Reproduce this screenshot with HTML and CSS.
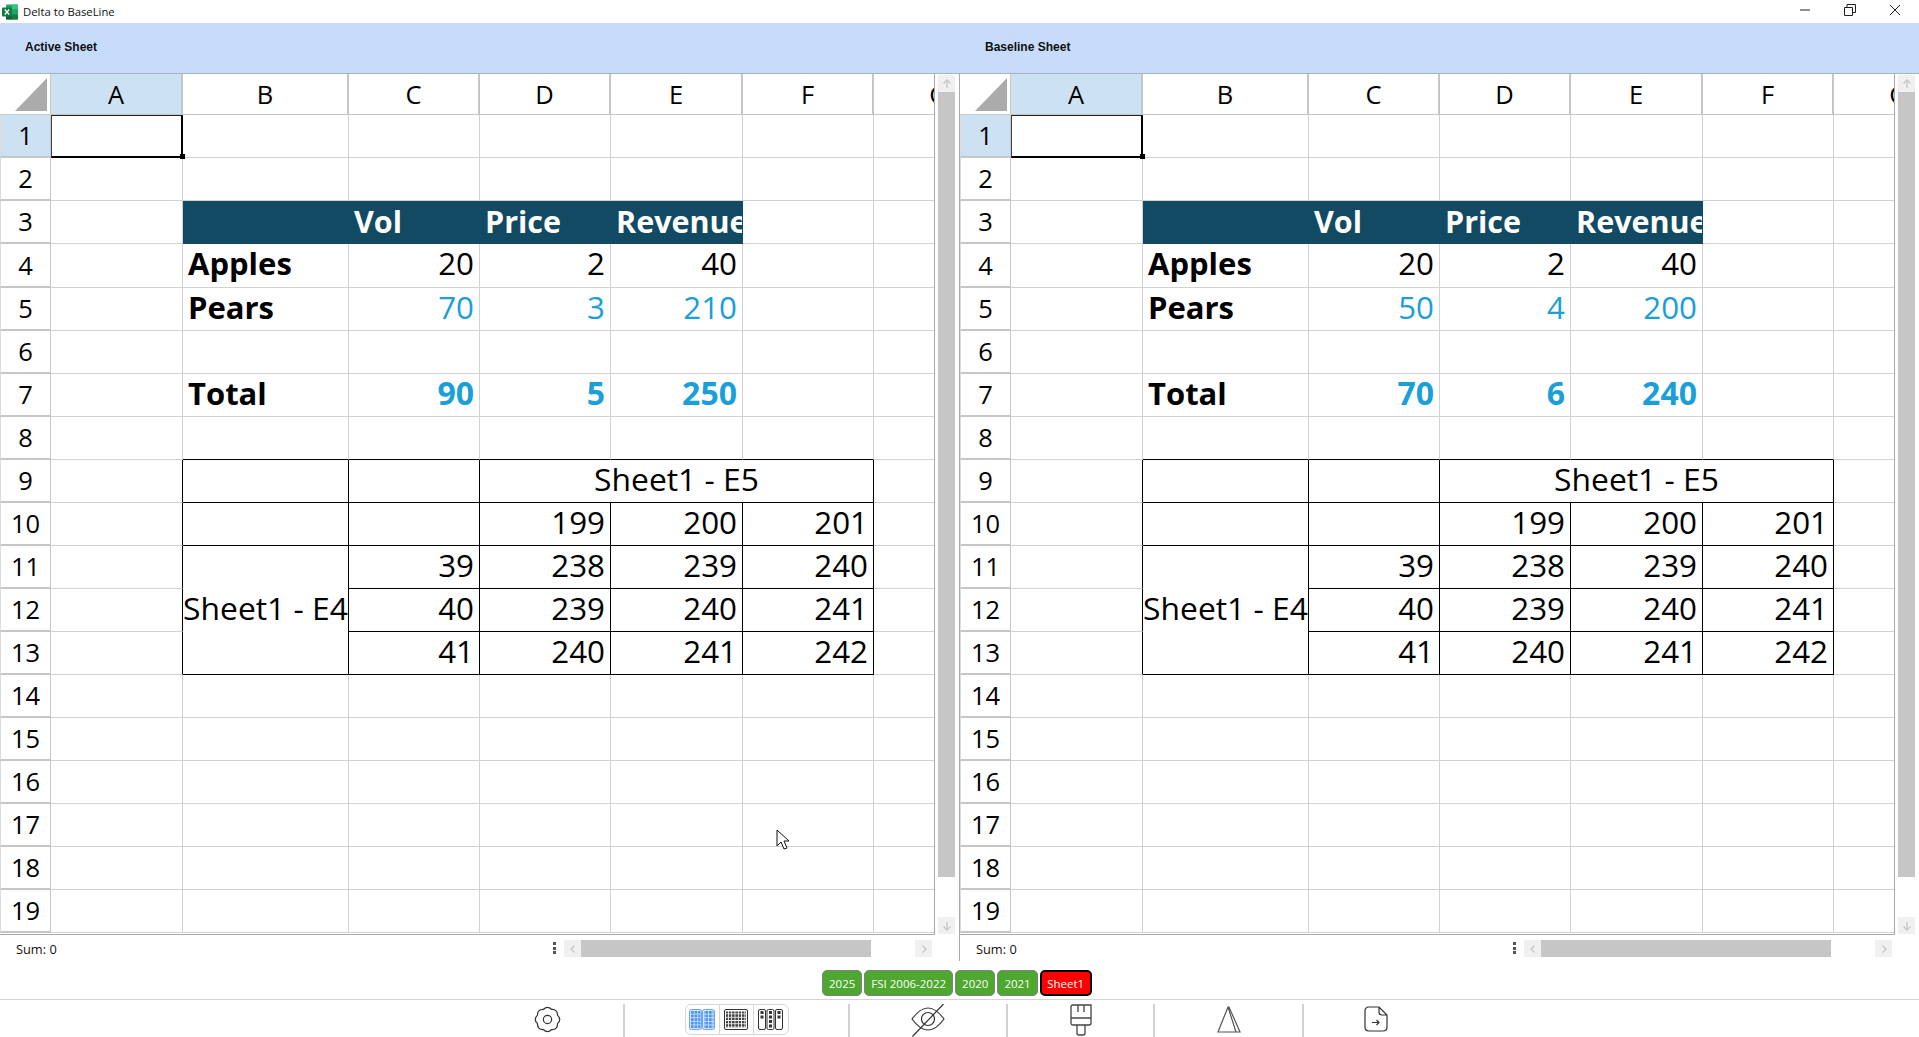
FILE: index.html
```html
<!DOCTYPE html>
<html lang="en">
<head>
<meta charset="utf-8">
<title>Delta to BaseLine</title>
<link rel="stylesheet" href="styles.css">
</head>
<body>
<header class="titlebar">
  <svg class="appicon" viewBox="0 0 16 16" width="16" height="16"><rect x="4" y="0.5" width="12" height="15" rx="1" fill="#21a366"/><rect x="10" y="0.5" width="6" height="5" fill="#33c481"/><rect x="10" y="5.5" width="6" height="5" fill="#21a366"/><rect x="10" y="10.5" width="6" height="5" fill="#107c41"/><rect x="4" y="10.5" width="6" height="5" fill="#185c37"/><rect x="0" y="3.5" width="10" height="9" rx="1" fill="#107c41"/><path d="M2.8 5.5l4.4 5M7.2 5.5l-4.4 5" stroke="#fff" stroke-width="1.3"/></svg>
  <span class="apptitle">Delta to BaseLine</span>
  <div class="winctl">
    <svg viewBox="0 0 12 12" width="12" height="12"><path d="M1 6h10" stroke="#222"/></svg>
    <svg viewBox="0 0 12 12" width="12" height="12"><path d="M.5 3.5h8v8h-8zM3 3.5V.5h8.5v8H8.5" fill="none" stroke="#222"/></svg>
    <svg viewBox="0 0 12 12" width="12" height="12"><path d="M1 1l10 10M11 1L1 11" stroke="#222"/></svg>
  </div>
</header>

<main class="panes">
  <section class="pane">
    <div class="band">Active Sheet</div>
    <div class="body first">
      <div class="sheetwrap">
        <div class="viewport">
          <table class="grid">
            <colgroup><col class="c0"><col class="c1"><col class="c2"><col class="c3"><col class="c3"><col class="c4"><col class="c3"><col class="c3"></colgroup>
            <tr class="hrow"><th class="corner"></th><th class="ch on">A</th><th class="ch">B</th><th class="ch">C</th><th class="ch">D</th><th class="ch">E</th><th class="ch">F</th><th class="ch">G</th></tr>
            <tr><th class="rh on">1</th><td class="sel"></td><td></td><td></td><td></td><td></td><td></td><td></td></tr>
            <tr><th class="rh">2</th><td></td><td></td><td></td><td></td><td></td><td></td><td></td></tr>
            <tr><th class="rh">3</th><td></td><td class="hd"></td><td class="hd">Vol</td><td class="hd">Price</td><td class="hd clip">Revenue</td><td></td><td></td></tr>
            <tr class="tall"><th class="rh">4</th><td></td><td class="name">Apples</td><td class="n">20</td><td class="n">2</td><td class="n">40</td><td></td><td></td></tr>
            <tr><th class="rh">5</th><td></td><td class="name">Pears</td><td class="n blue">70</td><td class="n blue">3</td><td class="n blue">210</td><td></td><td></td></tr>
            <tr><th class="rh">6</th><td></td><td></td><td></td><td></td><td></td><td></td><td></td></tr>
            <tr><th class="rh">7</th><td></td><td class="name">Total</td><td class="n blue b">90</td><td class="n blue b">5</td><td class="n blue b">250</td><td></td><td></td></tr>
            <tr><th class="rh">8</th><td></td><td class="bb"></td><td class="bb"></td><td class="bb"></td><td class="bb"></td><td class="bb"></td><td></td></tr>
            <tr><th class="rh">9</th><td class="br"></td><td class="k"></td><td class="k"></td><td class="k m" colspan="3">Sheet1 - E5</td><td></td></tr>
            <tr><th class="rh">10</th><td class="br"></td><td class="k"></td><td class="k"></td><td class="k n">199</td><td class="k n">200</td><td class="k n">201</td><td></td></tr>
            <tr><th class="rh">11</th><td class="br"></td><td class="k m" rowspan="3">Sheet1 - E4</td><td class="k n">39</td><td class="k n">238</td><td class="k n">239</td><td class="k n">240</td><td></td></tr>
            <tr><th class="rh">12</th><td class="br"></td><td class="k n">40</td><td class="k n">239</td><td class="k n">240</td><td class="k n">241</td><td></td></tr>
            <tr><th class="rh">13</th><td class="br"></td><td class="k n">41</td><td class="k n">240</td><td class="k n">241</td><td class="k n">242</td><td></td></tr>
            <tr><th class="rh">14</th><td></td><td></td><td></td><td></td><td></td><td></td><td></td></tr>
            <tr><th class="rh">15</th><td></td><td></td><td></td><td></td><td></td><td></td><td></td></tr>
            <tr><th class="rh">16</th><td></td><td></td><td></td><td></td><td></td><td></td><td></td></tr>
            <tr><th class="rh">17</th><td></td><td></td><td></td><td></td><td></td><td></td><td></td></tr>
            <tr><th class="rh">18</th><td></td><td></td><td></td><td></td><td></td><td></td><td></td></tr>
            <tr><th class="rh">19</th><td></td><td></td><td></td><td></td><td></td><td></td><td></td></tr>
          </table>
          <svg class="cursor" viewBox="0 0 14 22" width="14" height="22"><path d="M1 1v16l4-4 3 7 3-1-3-7h5z" fill="#fff" stroke="#111"/></svg>
        </div>
        <div class="vbar">
          <div class="sbtn"><svg viewBox="0 0 10 10" width="10" height="10"><path d="M5 9V1M1.5 4.5L5 1l3.5 3.5" fill="none" stroke="#c8c8c8" stroke-width="1.4"/></svg></div>
          <div class="vthumb"></div>
          <div class="vgap"></div>
          <div class="sbtn"><svg viewBox="0 0 10 10" width="10" height="10"><path d="M5 1v8M1.5 5.5L5 9l3.5-3.5" fill="none" stroke="#c8c8c8" stroke-width="1.4"/></svg></div>
        </div>
      </div>
      <div class="status">
        <span class="sum">Sum: 0</span>
        <span class="dots"><i></i><i></i><i></i></span>
        <div class="hbar">
          <div class="hbtn"><svg viewBox="0 0 10 10" width="10" height="10"><path d="M6.5 1.5L3 5l3.500 3.500" fill="none" stroke="#c8c8c8" stroke-width="1.4"/></svg></div>
          <div class="hthumb"></div>
          <div class="hgap"></div>
          <div class="hbtn"><svg viewBox="0 0 10 10" width="10" height="10"><path d="M3.500 1.500L7 5 3.500 8.500" fill="none" stroke="#c8c8c8" stroke-width="1.4"/></svg></div>
        </div>
      </div>
    </div>
  </section>

  <section class="pane">
    <div class="band">Baseline Sheet</div>
    <div class="body">
      <div class="sheetwrap">
        <div class="viewport">
          <table class="grid">
            <colgroup><col class="c0"><col class="c1"><col class="c2"><col class="c3"><col class="c3"><col class="c4"><col class="c3"><col class="c3"></colgroup>
            <tr class="hrow"><th class="corner"></th><th class="ch on">A</th><th class="ch">B</th><th class="ch">C</th><th class="ch">D</th><th class="ch">E</th><th class="ch">F</th><th class="ch">G</th></tr>
            <tr><th class="rh on">1</th><td class="sel"></td><td></td><td></td><td></td><td></td><td></td><td></td></tr>
            <tr><th class="rh">2</th><td></td><td></td><td></td><td></td><td></td><td></td><td></td></tr>
            <tr><th class="rh">3</th><td></td><td class="hd"></td><td class="hd">Vol</td><td class="hd">Price</td><td class="hd clip">Revenue</td><td></td><td></td></tr>
            <tr class="tall"><th class="rh">4</th><td></td><td class="name">Apples</td><td class="n">20</td><td class="n">2</td><td class="n">40</td><td></td><td></td></tr>
            <tr><th class="rh">5</th><td></td><td class="name">Pears</td><td class="n blue">50</td><td class="n blue">4</td><td class="n blue">200</td><td></td><td></td></tr>
            <tr><th class="rh">6</th><td></td><td></td><td></td><td></td><td></td><td></td><td></td></tr>
            <tr><th class="rh">7</th><td></td><td class="name">Total</td><td class="n blue b">70</td><td class="n blue b">6</td><td class="n blue b">240</td><td></td><td></td></tr>
            <tr><th class="rh">8</th><td></td><td class="bb"></td><td class="bb"></td><td class="bb"></td><td class="bb"></td><td class="bb"></td><td></td></tr>
            <tr><th class="rh">9</th><td class="br"></td><td class="k"></td><td class="k"></td><td class="k m" colspan="3">Sheet1 - E5</td><td></td></tr>
            <tr><th class="rh">10</th><td class="br"></td><td class="k"></td><td class="k"></td><td class="k n">199</td><td class="k n">200</td><td class="k n">201</td><td></td></tr>
            <tr><th class="rh">11</th><td class="br"></td><td class="k m" rowspan="3">Sheet1 - E4</td><td class="k n">39</td><td class="k n">238</td><td class="k n">239</td><td class="k n">240</td><td></td></tr>
            <tr><th class="rh">12</th><td class="br"></td><td class="k n">40</td><td class="k n">239</td><td class="k n">240</td><td class="k n">241</td><td></td></tr>
            <tr><th class="rh">13</th><td class="br"></td><td class="k n">41</td><td class="k n">240</td><td class="k n">241</td><td class="k n">242</td><td></td></tr>
            <tr><th class="rh">14</th><td></td><td></td><td></td><td></td><td></td><td></td><td></td></tr>
            <tr><th class="rh">15</th><td></td><td></td><td></td><td></td><td></td><td></td><td></td></tr>
            <tr><th class="rh">16</th><td></td><td></td><td></td><td></td><td></td><td></td><td></td></tr>
            <tr><th class="rh">17</th><td></td><td></td><td></td><td></td><td></td><td></td><td></td></tr>
            <tr><th class="rh">18</th><td></td><td></td><td></td><td></td><td></td><td></td><td></td></tr>
            <tr><th class="rh">19</th><td></td><td></td><td></td><td></td><td></td><td></td><td></td></tr>
          </table>
        </div>
        <div class="vbar">
          <div class="sbtn"><svg viewBox="0 0 10 10" width="10" height="10"><path d="M5 9V1M1.5 4.5L5 1l3.5 3.5" fill="none" stroke="#c8c8c8" stroke-width="1.4"/></svg></div>
          <div class="vthumb"></div>
          <div class="vgap"></div>
          <div class="sbtn"><svg viewBox="0 0 10 10" width="10" height="10"><path d="M5 1v8M1.5 5.5L5 9l3.5-3.5" fill="none" stroke="#c8c8c8" stroke-width="1.4"/></svg></div>
        </div>
      </div>
      <div class="status">
        <span class="sum">Sum: 0</span>
        <span class="dots"><i></i><i></i><i></i></span>
        <div class="hbar">
          <div class="hbtn"><svg viewBox="0 0 10 10" width="10" height="10"><path d="M6.5 1.5L3 5l3.500 3.500" fill="none" stroke="#c8c8c8" stroke-width="1.4"/></svg></div>
          <div class="hthumb"></div>
          <div class="hgap"></div>
          <div class="hbtn"><svg viewBox="0 0 10 10" width="10" height="10"><path d="M3.500 1.500L7 5 3.500 8.500" fill="none" stroke="#c8c8c8" stroke-width="1.4"/></svg></div>
        </div>
      </div>
    </div>
  </section>
</main>

<nav class="tabs">
  <span class="tab">2025</span><span class="tab">FSI 2006-2022</span><span class="tab">2020</span><span class="tab">2021</span><span class="tab cur">Sheet1</span>
</nav>

<footer class="toolbar">
  <div class="tool">
    <svg viewBox="-1 -1 30 30" width="31" height="31"><path d="M9.980 4.300Q14 0 18.020 4.300Q23.900 4.100 23.700 9.980Q28 14 23.700 18.020Q23.900 23.900 18.020 23.700Q14 28 9.980 23.700Q4.100 23.900 4.300 18.020Q0 14 4.300 9.980Q4.100 4.100 9.980 4.300Z" fill="none" stroke="#333" stroke-width="1.200"/><circle cx="14" cy="14" r="4" fill="none" stroke="#333" stroke-width="1.200"/></svg>
  </div>
  <div class="tool">
    <div class="seg">
      <div class="segitem">
        <svg viewBox="0 0 26 21" width="26" height="21"><defs><pattern id="pb" width="3.600" height="3.600" patternUnits="userSpaceOnUse" x="2" y="2"><rect width="2.800" height="2.800" fill="#4a94f2"/></pattern></defs><rect x=".5" y=".5" width="12" height="20" rx="2" fill="#d5e6fd" stroke="#6aa6f5"/><rect x="13.500" y=".5" width="12" height="20" rx="2" fill="#d5e6fd" stroke="#6aa6f5"/><rect x="2" y="2" width="9.500" height="17" fill="url(#pb)"/><rect x="15" y="2" width="9.500" height="17" fill="url(#pb)"/></svg>
      </div>
      <div class="segitem">
        <svg viewBox="0 0 24 21" width="24" height="21"><defs><pattern id="pd" width="3.300" height="3.300" patternUnits="userSpaceOnUse" x="1.500" y="2"><rect width="2.500" height="2.500" fill="#444"/></pattern></defs><rect x=".5" y=".5" width="23" height="20" rx="1.500" fill="#fff" stroke="#333"/><rect x="2" y="2.500" width="20" height="16" fill="url(#pd)"/></svg>
      </div>
      <div class="segitem">
        <svg viewBox="0 0 25 21" width="25" height="21"><g fill="#fff" stroke="#333"><rect x=".5" y=".5" width="7" height="20" rx="1.500"/><rect x="9" y=".5" width="7" height="20" rx="1.500"/><rect x="17.500" y=".5" width="7" height="20" rx="1.500"/></g><path d="M2.500 2h3v3h-3zM2.500 6.500h3v3h-3zM11 2h3v3h-3zM11 6.500h3v3h-3zM11 11h3v3h-3zM11 15.500h3v3h-3zM19.500 2h3v3h-3zM19.500 6.500h3v3h-3z" fill="#333"/></svg>
      </div>
    </div>
  </div>
  <div class="tool">
    <svg viewBox="0 0 34 33" width="34" height="33"><path d="M1 15Q9 4 17 4T33 15Q25 26 17 26T1 15Z" fill="none" stroke="#333" stroke-width="1.200"/><circle cx="17" cy="15" r="6.500" fill="none" stroke="#333" stroke-width="1.200"/><path d="M1.500 32.500L32.500 0" stroke="#333" stroke-width="1.200"/></svg>
  </div>
  <div class="tool">
    <svg viewBox="0 0 22 32" width="22" height="32"><path d="M1 3Q1 1 3 1H21V19Q21 21 19 21H3Q1 21 1 19ZM1 14H21M8 1V8M14 1V8M7 21V29Q7 31 9 31H13Q15 31 15 29V21" fill="none" stroke="#444" stroke-width="1.300"/></svg>
  </div>
  <div class="tool down1">
    <svg viewBox="0 0 24 28" width="24" height="28"><path d="M11 2L1 27H23L12 2ZM11 2L19 27" fill="none" stroke="#555" stroke-width="1.200"/></svg>
  </div>
  <div class="tool down2">
    <svg viewBox="0 0 24 26" width="24" height="26"><path d="M5 1H15L23 9V21Q23 25 19 25H5Q1 25 1 21V5Q1 1 5 1ZM15 1V6Q15 9 18 9H23M8 16.500H15M12.500 14L15 16.500L12.500 19" fill="none" stroke="#333" stroke-width="1.200"/></svg>
  </div>
</footer>
</body>
</html>
```
FILE: styles.css
```css
* { box-sizing: border-box; }
html, body { margin: 0; height: 100%; }
body {
  width: 1919px;
  height: 1037px;
  overflow: hidden;
  display: flex;
  flex-direction: column;
  background: #fff;
  color: #000;
  font-family: "Open Sans", sans-serif;
}

/* title bar */
.titlebar { height: 23px; display: flex; align-items: center; padding-left: 2px; flex: none; }
.appicon { flex: none; }
.apptitle { margin-left: 5px; font-size: 11.300px; color: #111; }
.winctl { margin-left: auto; display: flex; gap: 33px; padding-right: 18px; margin-top: -3px; }

/* panes */
.panes { display: flex; height: 938px; flex: none; }
.pane { width: 960px; display: flex; flex-direction: column; flex: none; }
.pane + .pane { width: 959px; }
.band {
  height: 51px;
  flex: none;
  background: #c7dcfa;
  border-bottom: 1px solid #a8b2bf;
  padding: 0 0 2px 25px;
  display: flex;
  align-items: center;
  font: bold 12px "Liberation Sans", Arial, sans-serif;
  color: #111;
}
.body { flex: 1; display: flex; flex-direction: column; min-height: 0; }
.body.first { border-right: 1px solid #a9a9a9; }
.sheetwrap { height: 861px; display: flex; flex: none; }
.viewport {
  width: 935px;
  flex: none;
  position: relative;
  overflow: hidden;
  border-right: 1px solid #a9a9a9;
  border-bottom: 1px solid #a9a9a9;
}
.cursor { position: absolute; left: 776px; top: 755px; }

/* sheet */
.grid { table-layout: fixed; width: 1005px; border-collapse: separate; border-spacing: 0; font-size: 31.300px; }
.c0 { width: 51px; }
.c1 { width: 132px; }
.c2 { width: 166px; }
.c3 { width: 131px; }
.c4 { width: 132px; }
.grid tr { height: 43px; }
.grid tr.hrow { height: 41px; }
.grid tr.tall { height: 44px; }
.grid td {
  padding: 0 5px 3px;
  border-right: 1px solid #d2d2d2;
  border-bottom: 1px solid #d2d2d2;
  white-space: nowrap;
  line-height: 1.2;
}
.grid td.clip { overflow: hidden; }
.grid th { padding: 0; font-weight: 400; font-size: 25.500px; line-height: 1.2; }
.corner { position: relative; border-bottom: 1px solid #c8c8c8; border-right: 1px solid #c8c8c8; }
.corner::after {
  content: "";
  position: absolute;
  left: 15px;
  top: 4px;
  width: 32px;
  height: 33px;
  background: #ababab;
  clip-path: polygon(100% 0, 100% 100%, 0 100%);
}
.ch { border-right: 2px solid #c6c6c6; border-bottom: 1px solid #c6c6c6; white-space: nowrap; }
.rh { border-left: 1px solid #dcdcdc; border-right: 1px solid #c6c6c6; border-bottom: 2px solid #c6c6c6; }
.on { background: #cce2f3; }
.grid td.sel { position: relative; border-color: transparent; }
.sel::before {
  content: "";
  position: absolute;
  inset: 0 -1px -1px 0;
  border: solid #000;
  border-width: 1px 2px 2px 1px;
  border-left-color: #444;
  border-top-color: #222;
}
.sel::after {
  content: "";
  position: absolute;
  right: -3px;
  bottom: -2px;
  width: 5px;
  height: 5px;
  background: #000;
  z-index: 1;
}
.grid td.hd { background: #124a63; border-color: #124a63; color: #fff; font-weight: 700; font-size: 30.500px; padding-bottom: 1px; }
.grid td.name { font-weight: 700; font-size: 31px; }
.grid td.n { text-align: right; }
.grid td.m { text-align: center; padding: 0 0 3px; font-size: 31.800px; }
.blue { color: #1a9fd8; }
.grid td.b { font-weight: 700; font-size: 32px; }
.grid td.br { border-right-color: #000; }
.grid td.bb { border-bottom-color: #000; }
.grid td.k { border-color: #000; }

/* scrollbars */
.vbar { width: 24px; flex: none; padding: 1px 4px 1px 3px; display: flex; flex-direction: column; }
.sbtn { height: 17px; flex: none; background: #f0f0f0; display: flex; align-items: center; justify-content: center; }
.vthumb { height: 785px; flex: none; background: #c6c6c6; }
.vgap { flex: 1; }
.status { flex: 1; display: flex; align-items: center; padding-left: 16px; }
.sum { font-size: 12.800px; color: #111; width: 533px; margin-top: 1px; }
.dots { width: 11px; margin-right: 4px; display: flex; flex-direction: column; align-items: center; gap: 1.500px; }
.dots i { width: 3px; height: 3px; background: #555; }
.hbar { width: 368px; height: 17px; display: flex; margin-top: 1px; }
.hbtn { width: 17px; flex: none; background: #f0f0f0; display: flex; align-items: center; justify-content: center; }
.hthumb { width: 290px; flex: none; background: #c6c6c6; }
.hgap { flex: 1; }

/* sheet tabs */
.tabs {
  height: 39px;
  flex: none;
  display: flex;
  gap: 2px;
  padding: 9px 0 3px 822px;
  border-bottom: 1px solid #d4d4d4;
}
.tab {
  height: 26px;
  padding: 0 6px;
  display: flex;
  align-items: center;
  border: 1px solid #808080;
  border-radius: 5px;
  background: #4ea72e;
  color: #fff;
  font-size: 11.500px;
}
.tab.cur { background: #ff0000; border: 2px solid #000; padding: 0 5.500px; }

/* toolbar */
.toolbar {
  flex: 1;
  display: grid;
  grid-template-columns: 153px 225px 158px 147px 149px 143px;
  justify-content: center;
  min-height: 0;
}
.tool {
  margin-top: 4px;
  display: flex;
  align-items: flex-start;
  justify-content: center;
  border-right: 2px solid #d2d2d2;
}
.tool:last-child { border-right: 0; }
.down1 svg { margin-top: 1px; }
.down2 svg { margin-top: 2px; }
.seg { display: flex; height: 31px; border: 1px solid #d6d6d6; border-radius: 6px; }
.segitem { width: 34px; display: flex; align-items: center; justify-content: center; border-right: 1px solid #d6d6d6; }
.segitem:last-child { border-right: 0; }
```
